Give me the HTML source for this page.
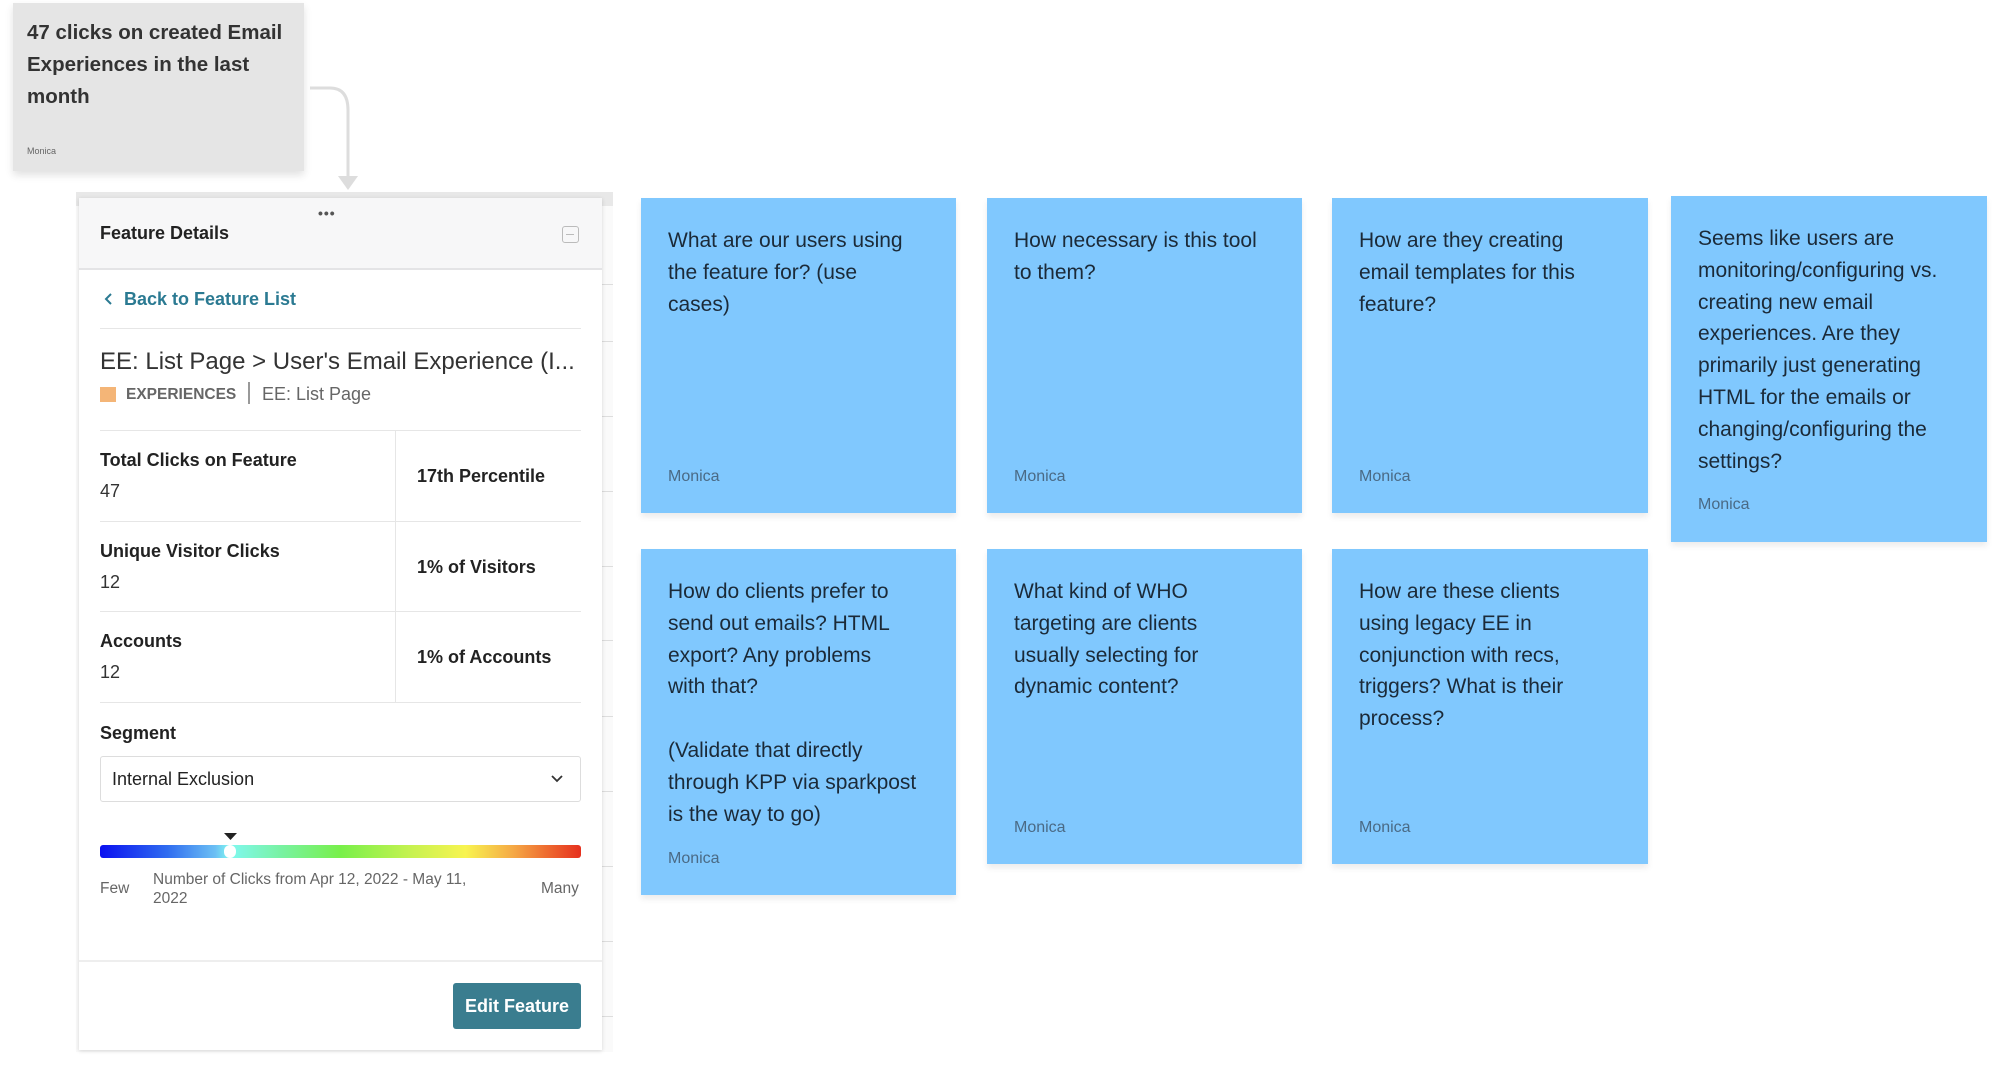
<!DOCTYPE html>
<html><head><meta charset="utf-8"><style>
*{margin:0;padding:0;box-sizing:border-box}
body{width:2000px;height:1065px;background:#fff;position:relative;overflow:hidden;font-family:"Liberation Sans",sans-serif;color:#222}
.a{position:absolute}
.st{position:absolute;background:#80c8fe;box-shadow:0 4px 6px rgba(0,0,0,0.08)}
.st .t{position:absolute;left:27px;top:27px;font-size:21px;line-height:31.8px;color:#1b2a38}
.st .m{position:absolute;left:27px;font-size:16px;color:#4a6a85}
.l{position:absolute;height:1px;background:#e6e6e6}
.bl{font-weight:bold;font-size:18px;color:#222}
.v{font-size:18px;color:#333}
</style></head><body>

<div class="a" style="left:13px;top:3px;width:291px;height:168px;background:#e5e5e5;box-shadow:0 4px 8px rgba(0,0,0,0.12)"></div>
<div class="a" style="left:27px;top:17px;font-size:20.5px;line-height:32px;font-weight:bold;color:#333">47 clicks on created Email<br>Experiences in the last<br>month</div>
<div class="a" style="left:27px;top:146px;font-size:9px;color:#666">Monica</div>

<svg class="a" style="left:300px;top:80px" width="70" height="115"><path d="M10 8 H30 Q48 8 48 30 V96" fill="none" stroke="#ddd" stroke-width="3"/><path d="M38 96 L58 96 L48 110 Z" fill="#ddd"/></svg>

<div class="a" style="left:76px;top:192px;width:537px;height:860px;background:#fafafa"></div>
<div class="a" style="left:76px;top:192px;width:537px;height:14px;background:#e8e8e8"></div>
<div class="l" style="left:602px;top:284px;width:11px;background:#ddd"></div>
<div class="l" style="left:602px;top:341px;width:11px;background:#ddd"></div>
<div class="l" style="left:602px;top:416px;width:11px;background:#ddd"></div>
<div class="l" style="left:602px;top:491px;width:11px;background:#ddd"></div>
<div class="l" style="left:602px;top:566px;width:11px;background:#ddd"></div>
<div class="l" style="left:602px;top:640px;width:11px;background:#ddd"></div>
<div class="l" style="left:602px;top:716px;width:11px;background:#ddd"></div>
<div class="l" style="left:602px;top:791px;width:11px;background:#ddd"></div>
<div class="l" style="left:602px;top:866px;width:11px;background:#ddd"></div>
<div class="l" style="left:602px;top:941px;width:11px;background:#ddd"></div>
<div class="l" style="left:602px;top:1016px;width:11px;background:#ddd"></div>

<div class="a" style="left:79px;top:198px;width:523px;height:852px;background:#fff;box-shadow:0 1px 4px rgba(0,0,0,0.15)"></div>
<div class="a" style="left:79px;top:198px;width:523px;height:72px;background:#f7f7f8;border-bottom:2px solid #e4e4e6"></div>
<div class="a" style="left:318px;top:205px;font-size:14px;letter-spacing:1px;color:#555;font-weight:bold">•••</div>
<div class="a bl" style="left:100px;top:223px">Feature Details</div>
<div class="a" style="left:562px;top:226px;width:17px;height:17px;border:1.5px solid #bbb;border-radius:3px"><div class="a" style="left:3px;top:6.5px;width:8px;height:1.5px;background:#bbb"></div></div>
<svg class="a" style="left:104px;top:292px" width="10" height="14"><path d="M7 2 L2 7 L7 12" fill="none" stroke="#2b7a92" stroke-width="2"/></svg>
<div class="a" style="left:124px;top:289px;font-size:18px;font-weight:bold;color:#2b7a92">Back to Feature List</div>
<div class="l" style="left:100px;top:328px;width:481px"></div>
<div class="a" style="left:100px;top:348px;font-size:24px;color:#333;white-space:nowrap">EE: List Page &gt; User's Email Experience (I...</div>
<div class="a" style="left:100px;top:387px;width:16px;height:15px;background:#f4b577"></div>
<div class="a" style="left:126px;top:386px;font-size:15.5px;font-weight:bold;color:#666">EXPERIENCES</div>
<div class="a" style="left:248px;top:382px;width:2px;height:22px;background:#999"></div>
<div class="a" style="left:262px;top:384px;font-size:18px;color:#666">EE: List Page</div>
<div class="l" style="left:100px;top:430px;width:481px"></div>
<div class="a" style="left:395px;top:431px;width:1px;height:271px;background:#e6e6e6"></div>
<div class="a bl" style="left:100px;top:450px">Total Clicks on Feature</div>
<div class="a v" style="left:100px;top:481px">47</div>
<div class="a bl" style="left:417px;top:466px">17th Percentile</div>
<div class="l" style="left:100px;top:521px;width:481px"></div>
<div class="a bl" style="left:100px;top:541px">Unique Visitor Clicks</div>
<div class="a v" style="left:100px;top:572px">12</div>
<div class="a bl" style="left:417px;top:557px">1% of Visitors</div>
<div class="l" style="left:100px;top:611px;width:481px"></div>
<div class="a bl" style="left:100px;top:631px">Accounts</div>
<div class="a v" style="left:100px;top:662px">12</div>
<div class="a bl" style="left:417px;top:647px">1% of Accounts</div>
<div class="l" style="left:100px;top:702px;width:481px"></div>
<div class="a bl" style="left:100px;top:723px">Segment</div>
<div class="a" style="left:100px;top:756px;width:481px;height:46px;border:1.5px solid #ddd;border-radius:3px"></div>
<div class="a" style="left:112px;top:769px;font-size:18px;color:#222">Internal Exclusion</div>
<svg class="a" style="left:551px;top:775px" width="12" height="8"><path d="M1 1 L6 6 L11 1" fill="none" stroke="#333" stroke-width="1.8"/></svg>
<svg class="a" style="left:224px;top:833px" width="13" height="8"><path d="M0 0 H13 L6.5 7 Z" fill="#222"/></svg>
<div class="a" style="left:100px;top:845px;width:481px;height:13px;border-radius:3px;background:linear-gradient(90deg,#0a10f0 0%,#2f6cf0 14%,#6cc0f4 24%,#80f8f0 27%,#78f2a0 38%,#78f04a 50%,#c8f250 65%,#f8f450 76%,#f5a845 86%,#ee6a30 93%,#e6301e 100%)"></div>
<div class="a" style="left:224px;top:845px;width:12px;height:13px;border-radius:6px;background:#fff"></div>
<div class="a" style="left:100px;top:880px;font-size:15.5px;color:#666">Few</div>
<div class="a" style="left:153px;top:870px;font-size:15.5px;line-height:19px;color:#666">Number of Clicks from Apr 12, 2022 - May 11,<br>2022</div>
<div class="a" style="left:541px;top:880px;font-size:15.5px;color:#666">Many</div>
<div class="l" style="left:79px;top:960px;width:523px;height:2px;background:#eee"></div>
<div class="a" style="left:453px;top:983px;width:128px;height:46px;background:#3a7d8f;border-radius:3px;color:#fff;font-weight:bold;font-size:18px;line-height:46px;text-align:center">Edit Feature</div>

<div class="st" style="left:641px;top:198px;width:315px;height:315px"><div class="t">What are our users using<br>the feature for? (use<br>cases)</div><div class="m" style="top:270px">Monica</div></div>
<div class="st" style="left:987px;top:198px;width:315px;height:315px"><div class="t">How necessary is this tool<br>to them?</div><div class="m" style="top:270px">Monica</div></div>
<div class="st" style="left:1332px;top:198px;width:316px;height:315px"><div class="t">How are they creating<br>email templates for this<br>feature?</div><div class="m" style="top:270px">Monica</div></div>
<div class="st" style="left:1671px;top:196px;width:316px;height:346px"><div class="t" style="top:27px">Seems like users are<br>monitoring/configuring vs.<br>creating new email<br>experiences. Are they<br>primarily just generating<br>HTML for the emails or<br>changing/configuring the<br>settings?</div><div class="m" style="top:300px">Monica</div></div>
<div class="st" style="left:641px;top:549px;width:315px;height:346px"><div class="t">How do clients prefer to<br>send out emails? HTML<br>export? Any problems<br>with that?<br><br>(Validate that directly<br>through KPP via sparkpost<br>is the way to go)</div><div class="m" style="top:301px">Monica</div></div>
<div class="st" style="left:987px;top:549px;width:315px;height:315px"><div class="t">What kind of WHO<br>targeting are clients<br>usually selecting for<br>dynamic content?</div><div class="m" style="top:270px">Monica</div></div>
<div class="st" style="left:1332px;top:549px;width:316px;height:315px"><div class="t">How are these clients<br>using legacy EE in<br>conjunction with recs,<br>triggers? What is their<br>process?</div><div class="m" style="top:270px">Monica</div></div>

</body></html>
